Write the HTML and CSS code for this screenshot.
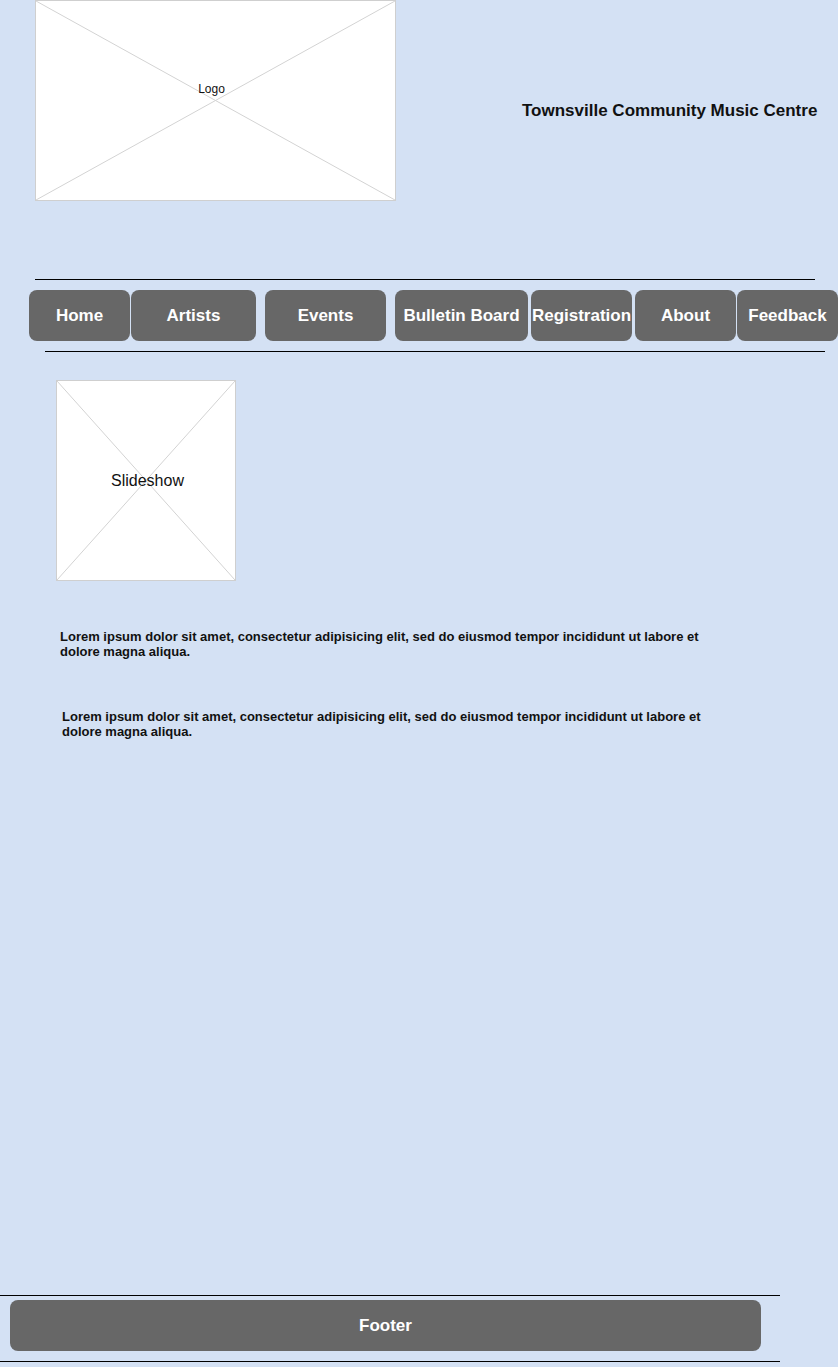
FILE: index.html
```html
<!DOCTYPE html>
<html lang="en">
<head>
<meta charset="utf-8">
<title>Townsville Community Music Centre</title>
<link rel="stylesheet" href="styles.css">
</head>
<body>
<div class="page">
  <header class="header">
    <div class="placeholder logo">
      <svg class="cross" viewBox="0 0 100 100" preserveAspectRatio="none">
        <line x1="0" y1="0" x2="100" y2="100" vector-effect="non-scaling-stroke"/>
        <line x1="100" y1="0" x2="0" y2="100" vector-effect="non-scaling-stroke"/>
      </svg>
      <span class="label logo-label">Logo</span>
    </div>
    <h1 class="site-title">Townsville Community Music Centre</h1>
  </header>

  <nav class="nav">
    <div class="rule rule-nav-top"></div>
    <ul class="nav-list">
      <li class="nav-item w-home">Home</li>
      <li class="nav-item w-artists">Artists</li>
      <li class="nav-item w-events">Events</li>
      <li class="nav-item w-bulletin">Bulletin Board</li>
      <li class="nav-item w-registration">Registration</li>
      <li class="nav-item w-about">About</li>
      <li class="nav-item w-feedback">Feedback</li>
    </ul>
    <div class="rule rule-nav-bottom"></div>
  </nav>

  <main class="main">
    <div class="placeholder slideshow">
      <svg class="cross" viewBox="0 0 100 100" preserveAspectRatio="none">
        <line x1="0" y1="0" x2="100" y2="100" vector-effect="non-scaling-stroke"/>
        <line x1="100" y1="0" x2="0" y2="100" vector-effect="non-scaling-stroke"/>
      </svg>
      <span class="label slide-label">Slideshow</span>
    </div>
    <p class="text text-one">Lorem ipsum dolor sit amet, consectetur adipisicing elit, sed do eiusmod tempor incididunt ut labore et dolore magna aliqua.</p>
    <p class="text text-two">Lorem ipsum dolor sit amet, consectetur adipisicing elit, sed do eiusmod tempor incididunt ut labore et dolore magna aliqua.</p>
  </main>

  <footer class="footer">
    <div class="rule rule-footer"></div>
    <div class="footer-box">Footer</div>
    <div class="rule rule-footer rule-footer-bottom"></div>
  </footer>
</div>
</body>
</html>
```

FILE: styles.css
```css
html, body {
  margin: 0;
  padding: 0;
}

body {
  background: #d4e1f4;
  font-family: "Liberation Sans", Arial, sans-serif;
  color: #111;
}

.page {
  min-height: 100vh;
  display: flex;
  flex-direction: column;
  box-sizing: border-box;
  padding-bottom: 5px;
}

/* Header */
.header {
  display: flex;
  align-items: flex-start;
}

.placeholder {
  position: relative;
  background: #fff;
  border: 1px solid #cfcfcf;
  box-sizing: border-box;
  flex-shrink: 0;
}

.cross {
  display: block;
  width: 100%;
  height: 100%;
}

.cross line {
  stroke: #d3d3d3;
  stroke-width: 1;
}

.label {
  position: absolute;
  inset: 0;
  display: flex;
  align-items: center;
  justify-content: center;
}

.logo {
  width: 361px;
  height: 201px;
  margin-left: 35px;
}

.logo-label {
  font-size: 12px;
  padding: 0 8px 24px 0;
}

.site-title {
  margin: 100px 0 0 126px;
  font-size: 17px;
  line-height: 21px;
  font-weight: bold;
  white-space: nowrap;
}

/* Nav */
.nav {
  margin-top: 78px;
}

.rule {
  height: 1px;
  background: #000;
  width: 780px;
}

.rule-nav-top {
  margin-left: 35px;
}

.rule-nav-bottom {
  margin-left: 45px;
}

.nav-list {
  list-style: none;
  margin: 10px 0;
  padding: 0 0 0 29px;
  display: flex;
}

.nav-item {
  height: 51px;
  background: #676767;
  border-radius: 8px;
  color: #fff;
  font-weight: bold;
  font-size: 17px;
  display: flex;
  align-items: center;
  justify-content: center;
  white-space: nowrap;
  flex-shrink: 0;
}

.w-home { width: 101px; }
.w-artists { width: 125px; margin-left: 1px; }
.w-events { width: 121px; margin-left: 9px; }
.w-bulletin { width: 133px; margin-left: 9px; }
.w-registration { width: 101px; margin-left: 3px; }
.w-about { width: 101px; margin-left: 3px; }
.w-feedback { width: 101px; margin-left: 1px; }

/* Main */
.main {
  padding: 28px 0 0 56px;
}

.slideshow {
  width: 180px;
  height: 201px;
}

.slide-label {
  font-size: 16px;
  padding-left: 3px;
}

.text {
  font-size: 13px;
  line-height: 15px;
  font-weight: bold;
  margin: 0;
  width: 660px;
}

.text-one {
  margin: 48px 0 0 4px;
}

.text-two {
  margin: 50px 0 0 6px;
}

/* Footer */
.footer {
  margin-top: auto;
}

.footer-box {
  margin: 4px 0 10px 10px;
  width: 751px;
  height: 51px;
  background: #676767;
  border-radius: 8px;
  color: #fff;
  font-weight: bold;
  font-size: 17px;
  display: flex;
  align-items: center;
  justify-content: center;
}
```
